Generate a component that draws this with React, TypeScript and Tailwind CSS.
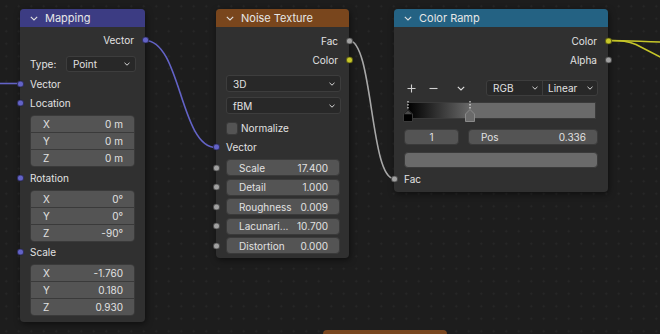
import type { ReactNode } from "react";

const PURPLE = "bg-[#6363c7]";
const GRAY = "bg-[#a1a1a1]";
const YELLOW = "bg-[#c7c729]";

function Chevron({ small }: { small?: boolean }) {
  return small ? (
    <svg width="6" height="4" viewBox="0 0 6 4" className="shrink-0">
      <path d="M0.5 0.8 L3 3.2 L5.5 0.8" fill="none" stroke="#d8d8d8" strokeWidth="1" />
    </svg>
  ) : (
    <svg width="8" height="5" viewBox="0 0 8 5" className="shrink-0">
      <path d="M0.8 0.8 L4 4 L7.2 0.8" fill="none" stroke="#e0e0e0" strokeWidth="1.1" />
    </svg>
  );
}

function Socket({ side, color }: { side: "l" | "r"; color: string }) {
  return (
    <span
      className={`absolute top-1/2 h-[7px] w-[7px] -translate-y-1/2 rounded-full border border-black/50 ${
        side === "l" ? "left-[-3.5px]" : "right-[-3.5px]"
      } ${color}`}
    />
  );
}

function Node({
  title,
  header,
  className,
  children,
}: {
  title: string;
  header: string;
  className: string;
  children?: ReactNode;
}) {
  return (
    <div className={`absolute flex flex-col rounded-[4px] bg-[#303030] shadow-[1px_2px_6px_rgba(0,0,0,0.5)] ${className}`}>
      <div className={`flex h-[18px] shrink-0 items-center gap-[7px] rounded-t-[4px] pl-[10px] ${header}`}>
        <Chevron />
        <span className="text-[11px] text-[#e6e6e6]">{title}</span>
      </div>
      {children}
    </div>
  );
}

function OutRow({ label, color, h }: { label: string; color: string; h: string }) {
  return (
    <div className={`relative flex items-center justify-end pr-[11px] ${h}`}>
      <span>{label}</span>
      <Socket side="r" color={color} />
    </div>
  );
}

function InRow({ label, color, h }: { label: string; color: string; h: string }) {
  return (
    <div className={`relative flex items-center pl-[10px] ${h}`}>
      <span>{label}</span>
      <Socket side="l" color={color} />
    </div>
  );
}

function Vec3({ values }: { values: string[] }) {
  return (
    <div className="mx-[10px] flex h-[52px] flex-col divide-y divide-[#3a3a3a] overflow-hidden rounded-[4px] border border-[#3a3a3a]">
      {["X", "Y", "Z"].map((a, i) => (
        <div key={a} className="flex flex-1 items-center justify-between bg-[#545454] pl-[12px] pr-[11px]">
          <span>{a}</span>
          <span>{values[i]}</span>
        </div>
      ))}
    </div>
  );
}

function Dropdown({ label, className }: { label: string; className: string }) {
  return (
    <div
      className={`flex items-center justify-between rounded-[3px] border border-[#3d3d3d] bg-[#282828] pl-[6px] pr-[5px] ${className}`}
    >
      <span>{label}</span>
      <Chevron small />
    </div>
  );
}

function Slider({ label, value }: { label: string; value: string }) {
  return (
    <div className="relative h-[17px]">
      <div className="ml-[10px] mr-[9px] flex h-full items-center justify-between rounded-[4px] border border-[#3a3a3a] bg-[#545454] pl-[12px] pr-[11px]">
        <span>{label}</span>
        <span>{value}</span>
      </div>
      <Socket side="l" color={GRAY} />
    </div>
  );
}

function Marker({ dark }: { dark?: boolean }) {
  return (
    <svg width="12" height="22" viewBox="0 0 12 22" className="absolute top-[-1px]">
      <line x1="6" y1="0" x2="6" y2="9" stroke="#ffffff" strokeWidth="1" strokeDasharray="1.5 1.5" />
      <path
        d="M6 8.5 L10.5 13 L10.5 20.5 L1.5 20.5 L1.5 13 Z"
        fill={dark ? "#000000" : "#6a6a6a"}
        stroke={dark ? "#3a3a3a" : "#8a8a8a"}
        strokeWidth="1"
      />
      {dark && <path d="M6 9.5 L10 13.2 L2 13.2 Z" fill="#4a4a4a" />}
    </svg>
  );
}

export default function App() {
  return (
    <div className="relative h-[334px] w-[660px] overflow-hidden bg-[#1d1d1d] bg-[radial-gradient(circle,#272727_0.9px,transparent_1.2px)] bg-size-[12.5px_12.5px] font-['Inter','DejaVu_Sans',sans-serif] text-[10px] leading-none text-[#e2e2e2]">
      <svg width="660" height="334" className="absolute inset-0" fill="none">
        <path d="M0 83.5 L20 83.5" stroke="#6363c7" strokeWidth="1.6" />
        <path d="M145 40.5 C 181 40.5, 180 147.5, 216 147.5" stroke="#6363c7" strokeWidth="1.6" />
        <path d="M349 40.5 C 373 40.5, 370 178.5, 394 178.5" stroke="#a8a8a8" strokeWidth="1.6" />
        <path d="M608 40.5 C 630 40.5, 640 41.5, 662 42" stroke="#c7c729" strokeWidth="1.6" />
        <path d="M608 40.5 C 622 40.5, 628 41, 636 44.5 L 662 58" stroke="#c7c729" strokeWidth="1.6" />
      </svg>

      {/* Mapping */}
      <Node title="Mapping" header="bg-[#3c3c83]" className="left-[20px] top-[9px] h-[313px] w-[125px] pb-[6px]">
        <div className="h-[3px]" />
        <OutRow label="Vector" color={PURPLE} h="h-[20px]" />
        <div className="mt-[4px] flex h-[20px] items-center pl-[10px] pr-[9px]">
          <span className="w-[36px]">Type:</span>
          <Dropdown label="Point" className="h-[16px] flex-1" />
        </div>
        <InRow label="Vector" color={PURPLE} h="h-[19px]" />
        <InRow label="Location" color={PURPLE} h="h-[20px]" />
        <div className="mt-[2px]">
          <Vec3 values={["0 m", "0 m", "0 m"]} />
        </div>
        <div className="mt-[1px]">
          <InRow label="Rotation" color={PURPLE} h="h-[20px]" />
        </div>
        <div className="mt-[2px]">
          <Vec3 values={["0°", "0°", "-90°"]} />
        </div>
        <InRow label="Scale" color={PURPLE} h="h-[20px]" />
        <div className="mt-[2px]">
          <Vec3 values={["-1.760", "0.180", "0.930"]} />
        </div>
      </Node>

      {/* Noise Texture */}
      <Node title="Noise Texture" header="bg-[#79461d]" className="left-[216px] top-[9px] h-[249px] w-[133px]">
        <div className="h-[4px]" />
        <OutRow label="Fac" color={GRAY} h="h-[19px]" />
        <OutRow label="Color" color={YELLOW} h="h-[19px]" />
        <div className="ml-[10px] mr-[8px] mt-[6px] flex flex-col gap-[5px]">
          <Dropdown label="3D" className="h-[17px]" />
          <Dropdown label="fBM" className="h-[17px]" />
        </div>
        <div className="mt-[5px] flex h-[18px] items-center gap-[3px] pl-[10px]">
          <span className="h-[13px] w-[12px] rounded-[3px] border border-[#3a3a3a] bg-[#545454]" />
          <span>Normalize</span>
        </div>
        <InRow label="Vector" color={PURPLE} h="h-[20px]" />
        <div className="mt-[2px] flex flex-col gap-[2.6px]">
          <Slider label="Scale" value="17.400" />
          <Slider label="Detail" value="1.000" />
          <Slider label="Roughness" value="0.009" />
          <Slider label="Lacunari..." value="10.700" />
          <Slider label="Distortion" value="0.000" />
        </div>
      </Node>

      {/* Color Ramp */}
      <Node title="Color Ramp" header="bg-[#246283]" className="left-[394px] top-[9px] h-[183px] w-[214px]">
        <div className="h-[4px]" />
        <OutRow label="Color" color={YELLOW} h="h-[19px]" />
        <OutRow label="Alpha" color={GRAY} h="h-[19px]" />
        <div className="ml-[10px] mr-[10px] mt-[11px] flex h-[16px] items-center">
          <span className="flex w-[14px] justify-center">
            <svg width="9" height="9" viewBox="0 0 9 9">
              <path d="M4.5 0.5 V8.5 M0.5 4.5 H8.5" stroke="#d0d0d0" strokeWidth="1.1" />
            </svg>
          </span>
          <span className="ml-[8px] flex w-[14px] justify-center">
            <svg width="9" height="9" viewBox="0 0 9 9">
              <path d="M0.5 4.5 H8.5" stroke="#d0d0d0" strokeWidth="1.1" />
            </svg>
          </span>
          <span className="ml-[14px] flex w-[14px] justify-center">
            <Chevron />
          </span>
          <div className="ml-auto flex h-full w-[112px] overflow-hidden rounded-[3px] border border-[#3d3d3d] bg-[#282828]">
            <div className="flex flex-1 items-center justify-between border-r border-[#3d3d3d] pl-[6px] pr-[4px]">
              <span>RGB</span>
              <Chevron small />
            </div>
            <div className="flex flex-1 items-center justify-between pl-[5px] pr-[4px]">
              <span>Linear</span>
              <Chevron small />
            </div>
          </div>
        </div>
        <div className="relative ml-[13px] mr-[12px] mt-[6px] h-[17px]">
          <div className="h-full border border-[#3a3a3a] bg-[linear-gradient(to_right,#000000_0px,#6a6a6a_63px,#6a6a6a_100%)]" />
          <div className="absolute left-[-5px] top-0">
            <Marker dark />
          </div>
          <div className="absolute left-[57px] top-0">
            <Marker />
          </div>
        </div>
        <div className="ml-[10px] mr-[10px] mt-[10px] flex h-[16px] gap-[9px]">
          <div className="flex w-[55px] items-center justify-center rounded-[4px] border border-[#3a3a3a] bg-[#545454]">1</div>
          <div className="flex flex-1 items-center justify-between rounded-[4px] border border-[#3a3a3a] bg-[#545454] pl-[12px] pr-[11px]">
            <span>Pos</span>
            <span>0.336</span>
          </div>
        </div>
        <div className="ml-[10px] mr-[10px] mt-[7px] h-[16px] rounded-[4px] border border-[#3a3a3a] bg-[#6a6a6a]" />
        <div className="mt-[1px]">
          <InRow label="Fac" color={GRAY} h="h-[20px]" />
        </div>
      </Node>

      {/* partially visible node */}
      <div className="absolute left-[323px] top-[330px] h-[10px] w-[124px] rounded-t-[4px] bg-[#79461d]" />
    </div>
  );
}
